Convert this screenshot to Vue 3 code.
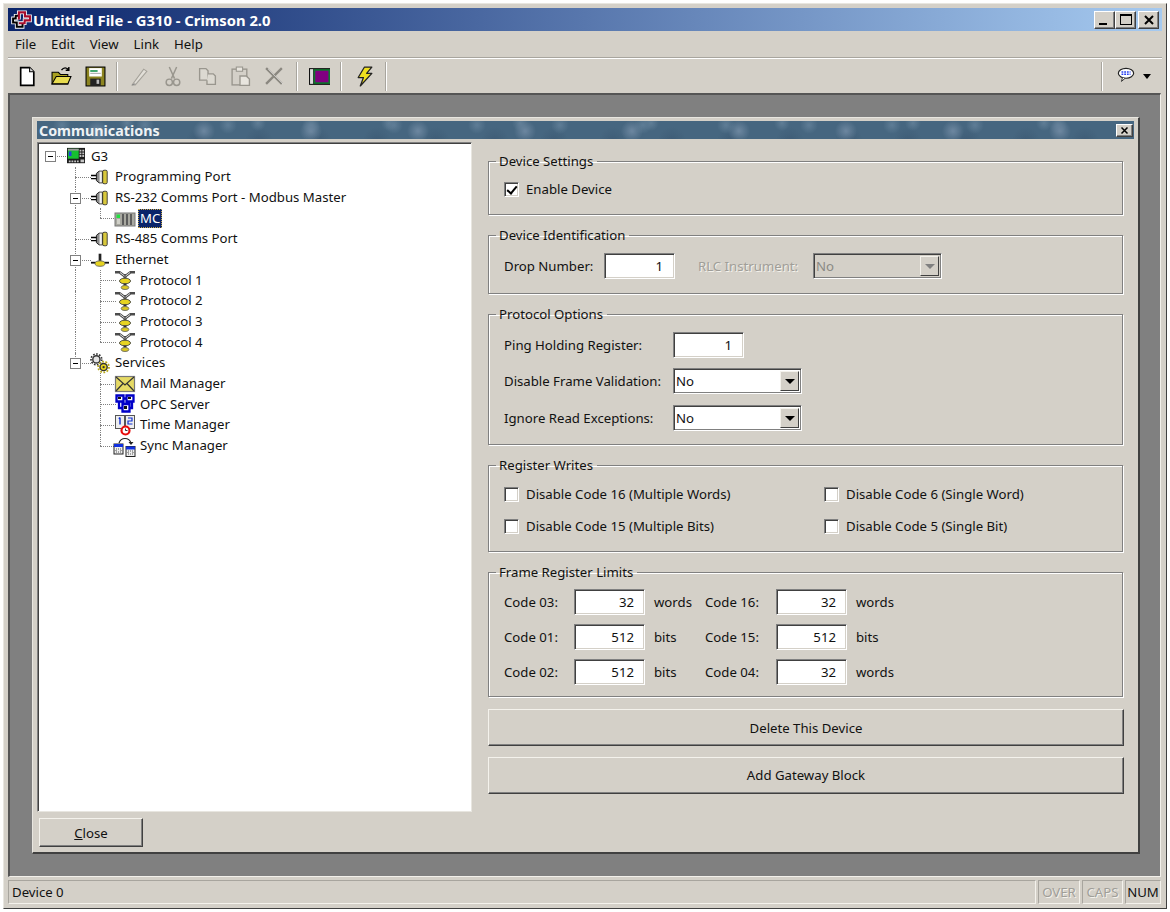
<script setup>
const menus = ['File', 'Edit', 'View', 'Link', 'Help']

const icons = {
  logo: '<path d="M7 6.500H4.500V9H2v3.800h3.500V17h5.500v-3.500M7.500 10V3.200h5.800v3.800H18v3.800h-5v2.700H7.500" fill="none" stroke="#fff" stroke-width="3.600"/><path d="M7 6.500H4.500V9H2v3.800h3.500V17h5.500v-3.500" fill="none" stroke="#000" stroke-width="1.900"/><path d="M7.500 10V3.200h5.800v3.800H18v3.800h-5v2.700H7.500" fill="none" stroke="#a80c2c" stroke-width="2"/>',
  close: '<path d="M2 2l8 8M10 2l-8 8" stroke="#000" stroke-width="2"/>',
  g3: '<rect x="0" y="1" width="20" height="17" fill="#1c1c1c"/><rect x="1" y="2" width="12" height="11" fill="#16c030"/><rect x="2" y="5" width="3" height="5" fill="#2040e0"/><rect x="1" y="2" width="12" height="2" fill="#9a9a9a"/><path d="M14 3h2v2h-2zM17 3h2v2h-2zM14 6h2v2h-2zM17 6h2v2h-2zM14 9h2v2h-2zM17 9h2v2h-2zM2 15h2v2H2zM5 15h2v2H5zM8 15h2v2H8zM11 15h2v2h-2zM15 14h4v3h-4z" fill="#c4c4c4"/>',
  port: '<path d="M0 7.500h7v1.600H0zM0 11h7v1.600H0z" fill="#000"/><path d="M6 6l3-2.500h4v13H9l-3-2.500z" fill="#8a8a8a" stroke="#111"/><rect x="9.500" y="4" width="2.500" height="12" fill="#f2f2f2"/><rect x="13" y="2.500" width="5" height="15" rx="1.500" fill="#d8c83c" stroke="#333"/>',
  plc: '<rect x="0" y="5" width="20" height="13" fill="#a8a8a0" stroke="#777"/><rect x="1.500" y="6.500" width="3.500" height="3.500" fill="#22e040"/><path d="M7 6h2v11H7zM11 6h2v11h-2zM15 6h2v11h-2z" fill="#5c5c5c"/><path d="M2 11h3v5H2z" fill="#d0d0c8"/>',
  ether: '<path d="M0 12h20v2H0z" fill="#111"/><path d="M8.500 3h3v8h-3z" fill="#222"/><ellipse cx="10" cy="14" rx="5.500" ry="3" fill="#e6d320" stroke="#665"/>',
  proto: '<path d="M0 1h5l4 3h2l4-3h5v2.500h-4L11.500 7v2h-3V7L4 3.500H0z" fill="#4c4c4c"/><path d="M5 2.500L9.500 6M15 2.500L10.500 6" stroke="#ddd" stroke-width="1"/><ellipse cx="10" cy="11" rx="5.500" ry="2.800" fill="#e6d320" stroke="#554"/><path d="M8.500 13.500h3v3h-3z" fill="#333"/><ellipse cx="10" cy="17.500" rx="3.800" ry="2" fill="#dcc820" stroke="#776"/>',
  gears: '<circle cx="6" cy="6" r="4" fill="#e4e4e4" stroke="#333" stroke-width="1.600"/><circle cx="6" cy="6" r="6" fill="none" stroke="#333" stroke-width="1.800" stroke-dasharray="1.800 1.600"/><circle cx="14" cy="14.500" r="4" fill="#e6d320" stroke="#333" stroke-width="1.600"/><circle cx="14" cy="14.500" r="6" fill="none" stroke="#b8a818" stroke-width="2" stroke-dasharray="2 1.700"/><circle cx="14" cy="14.500" r="1.300" fill="#333"/>',
  mail: '<rect x=".5" y="2.500" width="19" height="15" fill="#e6da64" stroke="#777" stroke-width="1.200"/><path d="M1 3l9 8 9-8M1 17l7-7.500M19 17l-7-7.500" fill="none" stroke="#333" stroke-width="1.200"/>',
  opc: '<g fill="none" stroke="#0000c8" stroke-width="2.300"><path d="M1.500 1.500h7v6h-7zM11.500 1.500h7v6h-7zM7.500 10h7v7.500h-7z"/><path d="M4 8v6h3M17 8v6h-2M9 4.500h2"/></g><path d="M3 3h3v2H3zM13 3h3v2h-3zM9 12h3v3H9z" fill="#111"/>',
  time: '<rect x=".5" y=".5" width="9" height="13" fill="#eee" stroke="#555"/><rect x="10.500" y=".5" width="9" height="13" fill="#eee" stroke="#555"/><path d="M5 2.500v7M3.800 3.800L5 2.500" stroke="#1030d0" stroke-width="1.400" fill="none"/><path d="M13 3h4v3h-4v3h4.500" stroke="#1030d0" stroke-width="1.200" fill="none"/><circle cx="10.500" cy="15.500" r="4" fill="#fff" stroke="#e80c0c" stroke-width="2.200"/><path d="M10.500 13.500v2h2" stroke="#333" fill="none"/>',
  sync: '<path d="M4 7c2-6 10-6 12 0" fill="none" stroke="#222" stroke-width="1.200"/><path d="M13.500 6l2.500 3 2.500-3z" fill="#222"/><rect x="-1" y="8" width="9" height="10" fill="#eee" stroke="#222"/><rect x="-1" y="8" width="9" height="3" fill="#1030e0"/><rect x="11" y="10.500" width="9" height="10" fill="#eee" stroke="#222"/><rect x="11" y="10.500" width="9" height="3" fill="#1030e0"/><path d="M1 13h5v3H1zM13 15h5v3h-5z" fill="none" stroke="#555" stroke-dasharray="1 1"/>',
  new: '<path d="M3.500 1.500h8.500l4 4v13H3.500z" fill="#fff" stroke="#000" stroke-width="1.600"/><path d="M12 1.500v4h4" fill="#ddd" stroke="#000"/>',
  open: '<path d="M1 17V6h6l2 2h7v9z" fill="#a8a020" stroke="#000"/><path d="M1 17l4-7h14l-3 7z" fill="#e8dc50" stroke="#000"/><path d="M10 4c2-3 5-3 7 0M17 1v3h-3" fill="none" stroke="#000" stroke-width="1.300"/>',
  save: '<rect x="1" y="1" width="18" height="18" fill="#8c8420" stroke="#000"/><rect x="4" y="2" width="12" height="8" fill="#fff"/><path d="M5 4h7v1.500H5z" fill="#109048"/><path d="M5 7h10" stroke="#aaa"/><rect x="5" y="12" width="10" height="7" fill="#222"/><rect x="11" y="13" width="2.500" height="4" fill="#bbb"/>',
  pen: '<path d="M3 18L14 3l3 2L6 18z" fill="#e2dfd8" stroke="#a5a29a"/><path d="M3 18l3-1" stroke="#888"/>',
  cut: '<g fill="none" stroke="#99968e" stroke-width="1.400"><path d="M6 1l5 11M13 1L8 12"/><circle cx="6" cy="15.500" r="3"/><circle cx="13" cy="15.500" r="3"/></g>',
  copy: '<path d="M2.500 2.500h6l2 2v9h-8z" fill="#dcd9d1" stroke="#99968e" stroke-width="1.300"/><path d="M10.500 7.500h5l2 2v8h-8v-4" fill="#dcd9d1" stroke="#99968e" stroke-width="1.300"/>',
  paste: '<rect x="2" y="3" width="14" height="15" fill="none" stroke="#99968e" stroke-width="1.300"/><rect x="6" y="1" width="6" height="4" fill="#e8e5de" stroke="#99968e"/><path d="M9.500 9.500h6l3 3v6h-9z" fill="#e8e5de" stroke="#99968e" stroke-width="1.300"/>',
  del: '<path d="M2 2l15 15M17 2L2 17" stroke="#8b8880" stroke-width="2.200"/><path d="M4 3l14 14" stroke="#eee" stroke-width=".6"/>',
  screen: '<rect x="0" y="2" width="21" height="16" fill="#111"/><rect x="1" y="3" width="3" height="14" fill="#ddd"/><rect x="4.500" y="3" width="15.500" height="14" fill="#0c7a2c"/><rect x="6" y="4.500" width="12.500" height="11" fill="#800080"/>',
  bolt: '<path d="M10 1h7l-5 6h5L6 19l3-8H4z" fill="#f0e020" stroke="#222" stroke-width="1.200" stroke-linejoin="round"/>',
  chat: '<ellipse cx="10" cy="7" rx="8.500" ry="5.500" fill="#fff" stroke="#222" stroke-width="1.300"/><path d="M6 12l-1 4 4-3.500" fill="#fff" stroke="#222"/><path d="M5 5.500h10M5 8h10" stroke="#2840f0" stroke-width="1.500" stroke-dasharray="2 1"/>',
}

const leftTools = ['new', 'open', 'save', '|', 'pen', 'cut', 'copy', 'paste', 'del', '|', 'screen', '|', 'bolt', '|']

const treeRows = [
  { label: 'G3', level: 0, icon: 'g3', box: true },
  { label: 'Programming Port', level: 1, icon: 'port', rail: true },
  { label: 'RS-232 Comms Port - Modbus Master', level: 1, icon: 'port', rail: true, box: true },
  { label: 'MC', level: 2, icon: 'plc', rail: true, sub: 'half', selected: true },
  { label: 'RS-485 Comms Port', level: 1, icon: 'port', rail: true },
  { label: 'Ethernet', level: 1, icon: 'ether', rail: true, box: true },
  { label: 'Protocol 1', level: 2, icon: 'proto', rail: true, sub: 'full' },
  { label: 'Protocol 2', level: 2, icon: 'proto', rail: true, sub: 'full' },
  { label: 'Protocol 3', level: 2, icon: 'proto', rail: true, sub: 'full' },
  { label: 'Protocol 4', level: 2, icon: 'proto', rail: true, sub: 'half' },
  { label: 'Services', level: 1, icon: 'gears', rail: 'half', box: true },
  { label: 'Mail Manager', level: 2, icon: 'mail', sub: 'full' },
  { label: 'OPC Server', level: 2, icon: 'opc', sub: 'full' },
  { label: 'Time Manager', level: 2, icon: 'time', sub: 'full' },
  { label: 'Sync Manager', level: 2, icon: 'sync', sub: 'half' },
]

const registerWrites = [
  'Disable Code 16 (Multiple Words)',
  'Disable Code 6 (Single Word)',
  'Disable Code 15 (Multiple Bits)',
  'Disable Code 5 (Single Bit)',
]

const limits = [
  ['Code 03:', '32', 'words', 'Code 16:', '32', 'words'],
  ['Code 01:', '512', 'bits', 'Code 15:', '512', 'bits'],
  ['Code 02:', '512', 'bits', 'Code 04:', '32', 'words'],
]
</script>

<template>
  <div class="window">
    <header class="titlebar">
      <svg class="logo" viewBox="0 0 20 20" v-html="icons.logo"></svg>
      <span class="title-text">Untitled File - G310 - Crimson 2.0</span>
      <div class="caption-btns">
        <button class="cap"><span class="glyph-min"></span></button>
        <button class="cap"><span class="glyph-max"></span></button>
        <button class="cap cap-close"><svg viewBox="0 0 12 12" v-html="icons.close"></svg></button>
      </div>
    </header>

    <nav class="menubar">
      <span v-for="m in menus" :key="m">{{ m }}</span>
    </nav>

    <div class="toolbar">
      <template v-for="(t, i) in leftTools" :key="i">
        <span v-if="t === '|'" class="tool-sep"></span>
        <span v-else class="tool">
          <svg viewBox="0 0 20 20" v-html="icons[t]"></svg>
        </span>
      </template>
      <span class="spacer"></span>
      <span class="tool-sep"></span>
      <span class="tool tool-chat">
        <svg viewBox="0 0 20 20" v-html="icons.chat"></svg>
        <i class="drop-arrow"></i>
      </span>
    </div>

    <main class="mdi">
      <section class="dialog">
        <div class="dialog-title">
          <span>Communications</span>
          <button class="cap cap-small"><svg viewBox="0 0 12 12" v-html="icons.close"></svg></button>
        </div>

        <div class="dialog-body">
          <div class="tree">
            <div
              v-for="row in treeRows"
              :key="row.label"
              class="tree-row"
              :class="'lvl-' + row.level"
            >
              <i v-if="row.rail" class="rail" :class="{ half: row.rail === 'half' }"></i>
              <i v-if="row.sub" class="rail sub" :class="{ half: row.sub === 'half' }"></i>
              <i class="stub"></i>
              <i v-if="row.box" class="box"></i>
              <svg class="tree-icon" viewBox="0 0 20 20" v-html="icons[row.icon]"></svg>
              <span class="tree-label" :class="{ selected: row.selected }">{{ row.label }}</span>
            </div>
          </div>

          <div class="pane">
            <fieldset class="group g-settings">
              <legend>Device Settings</legend>
              <label class="check"><i class="checkbox checked"></i>Enable Device</label>
            </fieldset>

            <fieldset class="group g-ident">
              <legend>Device Identification</legend>
              <div class="ident-row">
                <span class="ident-label">Drop Number:</span>
                <span class="input">1</span>
                <span class="disabled-label">RLC Instrument:</span>
                <span class="select is-disabled"><span>No</span><i class="select-btn"><b></b></i></span>
              </div>
            </fieldset>

            <fieldset class="group g-protocol">
              <legend>Protocol Options</legend>
              <div class="proto-row"><span class="proto-label">Ping Holding Register:</span><span class="input">1</span></div>
              <div class="proto-row"><span class="proto-label">Disable Frame Validation:</span><span class="select"><span>No</span><i class="select-btn"><b></b></i></span></div>
              <div class="proto-row"><span class="proto-label">Ignore Read Exceptions:</span><span class="select"><span>No</span><i class="select-btn"><b></b></i></span></div>
            </fieldset>

            <fieldset class="group g-writes">
              <legend>Register Writes</legend>
              <div class="writes-grid">
                <label v-for="w in registerWrites" :key="w" class="check"><i class="checkbox"></i>{{ w }}</label>
              </div>
            </fieldset>

            <fieldset class="group g-limits">
              <legend>Frame Register Limits</legend>
              <div v-for="(r, i) in limits" :key="i" class="limit-row">
                <span class="limit-label">{{ r[0] }}</span>
                <span class="input">{{ r[1] }}</span>
                <span class="limit-unit">{{ r[2] }}</span>
                <span class="limit-label">{{ r[3] }}</span>
                <span class="input">{{ r[4] }}</span>
                <span class="limit-unit">{{ r[5] }}</span>
              </div>
            </fieldset>

            <button class="btn wide">Delete This Device</button>
            <button class="btn wide">Add Gateway Block</button>
          </div>
        </div>

        <div class="dialog-foot">
          <button class="btn close-btn"><u>C</u>lose</button>
        </div>
      </section>
    </main>

    <footer class="statusbar">
      <span class="status-main">Device 0</span>
      <span class="status-key off k-over">OVER</span>
      <span class="status-key off k-caps">CAPS</span>
      <span class="status-key k-num">NUM</span>
    </footer>
  </div>
</template>

<style scoped>
* {
  box-sizing: border-box;
}
.window {
  width: 1164px;
  height: 906px;
  margin: 3px;
  padding: 4px 4px 4px 4px;
  background: #d4d0c8;
  border: 1px solid;
  border-color: #e8e6e0 #404040 #404040 #e8e6e0;
  font-family: "Noto Sans", "Liberation Sans", sans-serif;
  font-size: 13.2px;
  color: #111;
  display: flex;
  flex-direction: column;
}

/* title */
.titlebar {
  height: 23px;
  flex: none;
  display: flex;
  align-items: center;
  background: linear-gradient(90deg, #0a246a, #a6caf0);
  color: #fff;
  font-weight: 700;
  font-size: 14.8px;
  padding: 0 3px 0 3px;
}
.logo {
  width: 21px;
  height: 21px;
  margin-right: 1px;
}
.caption-btns {
  margin-left: auto;
  display: flex;
  gap: 0;
}
.cap {
  width: 21px;
  height: 18px;
  padding: 0;
  background: #d4d0c8;
  border: 1px solid;
  border-color: #fff #404040 #404040 #fff;
  box-shadow: inset -1px -1px 0 #808080;
  display: flex;
  align-items: center;
  justify-content: center;
}
.cap svg {
  width: 12px;
  height: 12px;
}
.cap-close {
  margin-left: 2px;
}
.glyph-min {
  width: 8px;
  height: 2px;
  background: #000;
  margin-top: 9px;
  margin-right: 3px;
}
.glyph-max {
  width: 12px;
  height: 11px;
  border: 1px solid #000;
  border-top-width: 2px;
}

/* menu + toolbar */
.menubar {
  height: 27px;
  flex: none;
  display: flex;
  align-items: center;
  gap: 15px;
  padding: 0 7px;
  border-bottom: 1px solid #a8a59e;
}
.toolbar {
  height: 35px;
  flex: none;
  display: flex;
  align-items: center;
  padding-left: 3px;
  border-top: 1px solid #fff;
}
.tool {
  width: 33.7px;
  height: 26px;
  display: flex;
  align-items: center;
  justify-content: center;
}
.tool svg {
  width: 21px;
  height: 21px;
}
.tool-sep {
  width: 2px;
  height: 29px;
  margin: 0 5px 0 4px;
  background: #a8a59e;
  border-right: 1px solid #fff;
}
.spacer {
  flex: 1;
}
.tool-chat {
  width: 54px;
  gap: 8px;
  padding-right: 2px;
}
.tool-chat svg {
  width: 18px;
  height: 18px;
}
.drop-arrow {
  border: 4px solid transparent;
  border-top: 5px solid #000;
  border-bottom: 0;
}

/* mdi workspace */
.mdi {
  flex: 1;
  margin-right: 1px;
  padding: 22px 20px 22px 22px;
  background: #808080;
  border: 1px solid;
  border-color: #555 #f2f0ea #f2f0ea #555;
  border-top-width: 2px;
  border-left-width: 2px;
}
.dialog {
  height: 100%;
  padding: 3px 4px 5px 4px;
  background: #d4d0c8;
  border: 1px solid;
  border-color: #e8e6e0 #404040 #404040 #e8e6e0;
  border-right-width: 2px;
  border-bottom-width: 2px;
  display: flex;
  flex-direction: column;
}
.dialog-title {
  height: 18px;
  flex: none;
  display: flex;
  align-items: center;
  justify-content: space-between;
  padding: 0 1px 0 2px;
  color: #eef2f4;
  font-weight: 700;
  font-size: 14.3px;
  background-color: #466680;
  background-image:
    radial-gradient(circle 11px at 60px 10px, #6d87a0, transparent),
    radial-gradient(circle 9px at 25px 4px, #5f7d96, transparent),
    radial-gradient(circle 8px at 90px 2px, #607e96, transparent),
    radial-gradient(circle 14px at 45px 20px, #3e5c76, transparent);
  background-size: 107px 18px, 83px 18px, 131px 18px, 59px 18px;
}
.cap-small {
  width: 17px;
  height: 13px;
}
.cap-small svg {
  width: 9px;
  height: 9px;
}
.dialog-body {
  flex: 1;
  min-height: 0;
  display: flex;
  gap: 16px;
  padding-top: 3px;
}

/* tree */
.tree {
  width: 435px;
  padding: 3px 0 0 2px;
  background: #fff;
  border: 1px solid;
  border-color: #808080 #e8e6e0 #e8e6e0 #808080;
  box-shadow: inset 1px 1px 0 #404040;
}
.tree-row {
  position: relative;
  height: 20.67px;
  display: flex;
  align-items: center;
}
.lvl-0 { padding-left: 27px; }
.lvl-1 { padding-left: 51px; }
.lvl-2 { padding-left: 75px; }
.tree-icon {
  width: 18px;
  height: 18px;
  flex: none;
  position: relative;
  z-index: 1;
  overflow: visible;
}
.lvl-2 .tree-icon {
  width: 20px;
  height: 20px;
}
.tree-label {
  margin-left: 5px;
  padding: 0 1px;
  line-height: 19px;
}
.lvl-2 .tree-label {
  margin-left: 4px;
}
.lvl-2 .selected {
  background: #0a246a;
  color: #fff;
  outline: 1px dotted #c8a848;
  outline-offset: -1px;
  margin-left: 3px;
  padding: 0 2px;
}
.rail {
  position: absolute;
  top: 0;
  bottom: 0;
  left: 35px;
  border-left: 1px dotted #808080;
}
.rail.half {
  bottom: 50%;
}
.rail.sub {
  left: 60px;
}
.stub {
  position: absolute;
  top: 50%;
  width: 16px;
  border-top: 1px dotted #808080;
}
.lvl-0 .stub { left: 10px; }
.lvl-1 .stub { left: 35px; }
.lvl-2 .stub { left: 60px; }
.box {
  position: absolute;
  top: 50%;
  width: 11px;
  height: 11px;
  margin-top: -5px;
  background:
    linear-gradient(#000, #000) center / 5px 1px no-repeat,
    #fff;
  border: 1px solid #808080;
  z-index: 1;
}
.lvl-0 .box { left: 5px; }
.lvl-1 .box { left: 30px; }

/* right pane */
.pane {
  width: 636px;
  display: flex;
  flex-direction: column;
}
.group {
  margin: 0 1px 11px 0;
  padding: 0 15px;
  min-width: 0;
  border: 1px solid #808080;
  box-shadow: 1px 1px 0 #fff, inset 1px 1px 0 #fff;
}
.group legend {
  margin-left: -8px;
  padding: 0 4px 0 3px;
  line-height: 18px;
}
.g-settings { margin-top: 10px; height: 63px; }
.g-ident { height: 68px; }
.g-protocol { height: 140px; }
.g-writes { height: 96px; }
.g-limits { height: 134px; }

.check {
  display: flex;
  align-items: center;
  gap: 7px;
  height: 24px;
}
.g-settings .check {
  margin-top: 7px;
}
.checkbox {
  width: 15px;
  height: 15px;
  flex: none;
  background: #fff;
  border: 1px solid;
  border-color: #808080 #fff #fff #808080;
  box-shadow: inset 1px 1px 0 #404040, inset -1px -1px 0 #d4d0c8;
  position: relative;
}
.checkbox.checked::after {
  content: "";
  position: absolute;
  left: 4px;
  top: 1.500px;
  width: 4px;
  height: 8px;
  border: solid #000;
  border-width: 0 2px 2px 0;
  transform: rotate(40deg);
}
.writes-grid {
  display: grid;
  grid-template-columns: 320px 1fr;
  row-gap: 8px;
  margin-top: 8px;
}

.input,
.select {
  height: 26px;
  background: #fff;
  border: 1px solid;
  border-color: #808080 #fff #fff #808080;
  box-shadow: inset 1px 1px 0 #404040, inset -1px -1px 0 #d4d0c8;
  display: inline-flex;
  align-items: center;
}
.input {
  width: 71px;
  justify-content: flex-end;
  padding-right: 11px;
  flex: none;
}
.select {
  width: 129px;
  padding: 0 2px 0 2px;
  justify-content: space-between;
  flex: none;
  box-shadow: inset 1px 1px 0 #404040, inset -1px -1px 0 #808080;
}
.select-btn {
  width: 19px;
  height: 20px;
  background: #d4d0c8;
  border: 1px solid;
  border-color: #f4f2ec #404040 #404040 #f4f2ec;
  display: flex;
  align-items: center;
  justify-content: center;
}
.select-btn b {
  border: 5px solid transparent;
  border-top: 5px solid #000;
  border-bottom: 0;
}
.is-disabled {
  background: #d4d0c8;
  color: #8a8a84;
}
.is-disabled .select-btn b {
  border-top-color: #808080;
}

.ident-row {
  display: flex;
  align-items: center;
  margin-top: 9px;
}
.ident-label {
  width: 100px;
}
.disabled-label {
  margin: 0 13px 0 23px;
  width: 102px;
  white-space: nowrap;
  color: #a09e98;
  text-shadow: 1px 1px 0 #f4f2ec;
}

.proto-row {
  display: flex;
  align-items: center;
  height: 26px;
  margin-bottom: 11px;
}
.proto-row:first-of-type {
  margin-top: 9px;
  margin-bottom: 10px;
}
.proto-label {
  width: 169px;
  white-space: nowrap;
}

.limit-row {
  display: flex;
  align-items: center;
  height: 26px;
  margin-bottom: 9px;
}
.limit-row:first-of-type {
  margin-top: 8px;
}
.limit-label {
  width: 70px;
}
.limit-row .limit-label:nth-child(4) {
  width: 71px;
}
.limit-unit {
  margin-left: 9px;
  width: 51px;
}
.limit-row .input {
  padding-right: 10px;
}

.btn {
  background: #d4d0c8;
  border: 1px solid;
  border-color: #f4f2ec #404040 #404040 #f4f2ec;
  box-shadow: inset -1px -1px 0 #808080;
  font: inherit;
  color: inherit;
  padding: 0;
}
.wide {
  height: 37px;
  width: 636px;
  margin-bottom: 10.5px;
}
.wide:first-of-type {
  margin-top: 1px;
}

.dialog-foot {
  flex: none;
  padding: 6px 0 0 2px;
}
.close-btn {
  width: 104px;
  height: 29px;
}

/* status bar */
.statusbar {
  height: 24px;
  flex: none;
  margin-top: 3px;
  margin-right: 1px;
  display: flex;
  gap: 2px;
}
.statusbar span {
  display: flex;
  align-items: center;
  border: 1px solid;
  border-color: #a8a59e #f4f2ec #f4f2ec #a8a59e;
  padding: 0 3px;
}
.status-main {
  flex: 1;
}
.status-key {
  justify-content: center;
}
.off {
  color: #a09e98;
  text-shadow: 1px 1px 0 #f4f2ec;
}
.k-over { width: 42px; }
.k-caps { width: 41px; }
.k-num { width: 36px; }
</style>
